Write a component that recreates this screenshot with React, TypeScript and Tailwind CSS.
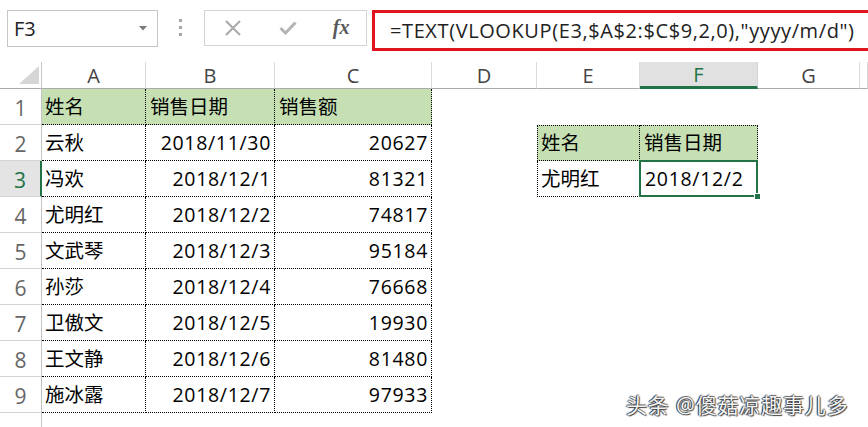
import React from "react";

const FONT = "font-['Open_Sans','Noto_Sans_CJK_SC',sans-serif]";

const DATA: [string, string, string][] = [
  ["云秋", "2018/11/30", "20627"],
  ["冯欢", "2018/12/1", "81321"],
  ["尤明红", "2018/12/2", "74817"],
  ["文武琴", "2018/12/3", "95184"],
  ["孙莎", "2018/12/4", "76668"],
  ["卫傲文", "2018/12/5", "19930"],
  ["王文静", "2018/12/6", "81480"],
  ["施冰露", "2018/12/7", "97933"],
];

const COLS = ["A", "B", "C", "D", "E", "F", "G", ""];

const dotted = "border-dotted border-black";

function FormulaBar() {
  return (
    <div className="flex items-start pt-[10px] h-[62px]">
      {/* name box */}
      <div className="shrink-0 ml-[7px] w-[151px] h-[37px] border border-[#c6c6c6] flex items-center justify-between pl-[6px] pr-[10px]">
        <span className="text-[20px] text-[#222] leading-none">F3</span>
        <svg width="8" height="5" viewBox="0 0 8 5">
          <path d="M0 0 L8 0 L4 4.5 Z" fill="#7a7a7a" />
        </svg>
      </div>
      {/* separator dots */}
      <div className="shrink-0 ml-[21px] mt-[9px] flex flex-col gap-[4px]">
        <div className="w-[3px] h-[3px] bg-[#a6a6a6]" />
        <div className="w-[3px] h-[3px] bg-[#a6a6a6]" />
        <div className="w-[3px] h-[3px] bg-[#a6a6a6]" />
      </div>
      {/* buttons */}
      <div className="shrink-0 ml-[22px] w-[163px] h-[36px] border border-[#d4d4d4] flex items-center">
        <span className="w-[56px] flex justify-center">
          <svg width="18" height="16" viewBox="0 0 18 16">
            <path d="M2 1 L16 15 M16 1 L2 15" stroke="#a9a9a9" strokeWidth="2" fill="none" />
          </svg>
        </span>
        <span className="w-[56px] flex justify-center">
          <svg width="18" height="14" viewBox="0 0 18 14">
            <path d="M1.5 7 L6.5 12 L16.5 1.5" stroke="#b4b4b4" strokeWidth="3" fill="none" />
          </svg>
        </span>
        <span className="w-[50px] flex justify-center font-['Liberation_Serif',serif] italic font-bold text-[20px] text-[#5a5a5a] leading-none pb-[2px]">
          fx
        </span>
      </div>
      {/* formula input, highlighted */}
      <div className="ml-[5px] w-[520px] shrink-0 h-[41px] border-[3px] border-[#e0141e] flex items-center pl-[15px]">
        <span className="text-[20px] text-[#222] whitespace-nowrap tracking-[0.03em] leading-none">
          =TEXT(VLOOKUP(E3,$A$2:$C$9,2,0),"yyyy/m/d")
        </span>
      </div>
    </div>
  );
}

function Sheet() {
  return (
    <div className="grid grid-cols-[42px_104px_129px_157px_105px_103px_118px_102px_1fr] grid-rows-[27px_repeat(9,36px)_1fr] h-[365px]">
      {/* corner */}
      <div className="border-r border-b border-r-[#c4c4c4] border-b-[#ababab] flex items-end justify-end pr-[2px] pb-[4px]">
        <svg width="20" height="18" viewBox="0 0 20 18">
          <path d="M20 0 L20 18 L0 18 Z" fill="#d6d6d6" />
        </svg>
      </div>
      {COLS.map((c) =>
        c === "F" ? (
          <div
            key={c}
            className="bg-[#e1e1e1] border-r border-r-[#d4d4d4] border-b-[3px] border-b-[#217346] flex items-center justify-center text-[20px] text-[#217346] pt-[2px]"
          >
            {c}
          </div>
        ) : (
          <div
            key={c || "x"}
            className="border-r border-b border-r-[#dadada] border-b-[#ababab] flex items-center justify-center text-[20px] text-[#444] pt-[2px]"
          >
            {c}
          </div>
        )
      )}

      {Array.from({ length: 9 }).map((_, r) => {
        const rowNo = r + 1;
        const isHead = r === 0;
        const row = isHead ? ["姓名", "销售日期", "销售额"] : DATA[r - 1];
        return (
          <React.Fragment key={r}>
            {rowNo === 3 ? (
              <div className="bg-[#e4e4e4] border-r-[2px] border-r-[#217346] border-b border-b-[#d4d4d4] flex items-center justify-center text-[21px] text-[#217346] pt-[5px]">
                {rowNo}
              </div>
            ) : (
              <div className="border-r border-b border-r-[#c4c4c4] border-b-[#d4d4d4] flex items-center justify-center text-[21px] text-[#666] pt-[5px]">
                {rowNo}
              </div>
            )}
            {/* A */}
            <div
              className={`border-r border-b ${dotted} flex items-center pl-[3px] text-[19.5px] text-black ${isHead ? "bg-[#c6e0b4]" : ""}`}
            >
              {row[0]}
            </div>
            {/* B */}
            <div
              className={`border-r border-b ${dotted} flex items-center text-[19.5px] text-black ${isHead ? "bg-[#c6e0b4] pl-[4px]" : "justify-end pr-[3px] tracking-[0.035em]"}`}
            >
              {row[1]}
            </div>
            {/* C */}
            <div
              className={`border-r border-b ${dotted} flex items-center text-[19.5px] text-black ${isHead ? "bg-[#c6e0b4] pl-[4px]" : "justify-end pr-[3px] tracking-[0.035em]"}`}
            >
              {row[2]}
            </div>
            {/* D */}
            <div />
            {/* E, F */}
            {rowNo === 2 ? (
              <>
                <div className={`border ${dotted} bg-[#c6e0b4] flex items-center pl-[3px] text-[19.5px]`}>
                  姓名
                </div>
                <div className={`border-t border-r border-b ${dotted} bg-[#c6e0b4] flex items-center pl-[4px] text-[19.5px]`}>
                  销售日期
                </div>
              </>
            ) : rowNo === 3 ? (
              <>
                <div className={`border-l border-r border-b ${dotted} flex items-center pl-[3px] text-[19.5px]`}>
                  尤明红
                </div>
                <div className={`relative border-r border-b ${dotted} flex items-center pl-[5px] text-[19.5px] tracking-[0.035em]`}>
                  2018/12/2
                  <div className="absolute -left-px -top-px -right-px -bottom-px border-2 border-[#217346]" />
                  <div className="absolute -right-[4px] -bottom-[4px] w-[7px] h-[7px] bg-[#217346] border border-white" />
                </div>
              </>
            ) : (
              <>
                <div />
                <div />
              </>
            )}
            <div />
            <div />
          </React.Fragment>
        );
      })}

      {/* trailing row */}
      <div className="border-r border-r-[#c4c4c4]" />
    </div>
  );
}

export default function App() {
  return (
    <div className={`relative w-[868px] h-[427px] overflow-hidden bg-white ${FONT}`}>
      <FormulaBar />
      <Sheet />
      <div className="absolute left-[626px] top-[390px] text-[21px] tracking-[0.04em] text-[#f4f4f4] whitespace-nowrap [text-shadow:-1px_0_1px_#222,1px_1px_1px_#444,0_-1px_1px_#666]">
        头条 @傻菇凉趣事儿多
      </div>
    </div>
  );
}
